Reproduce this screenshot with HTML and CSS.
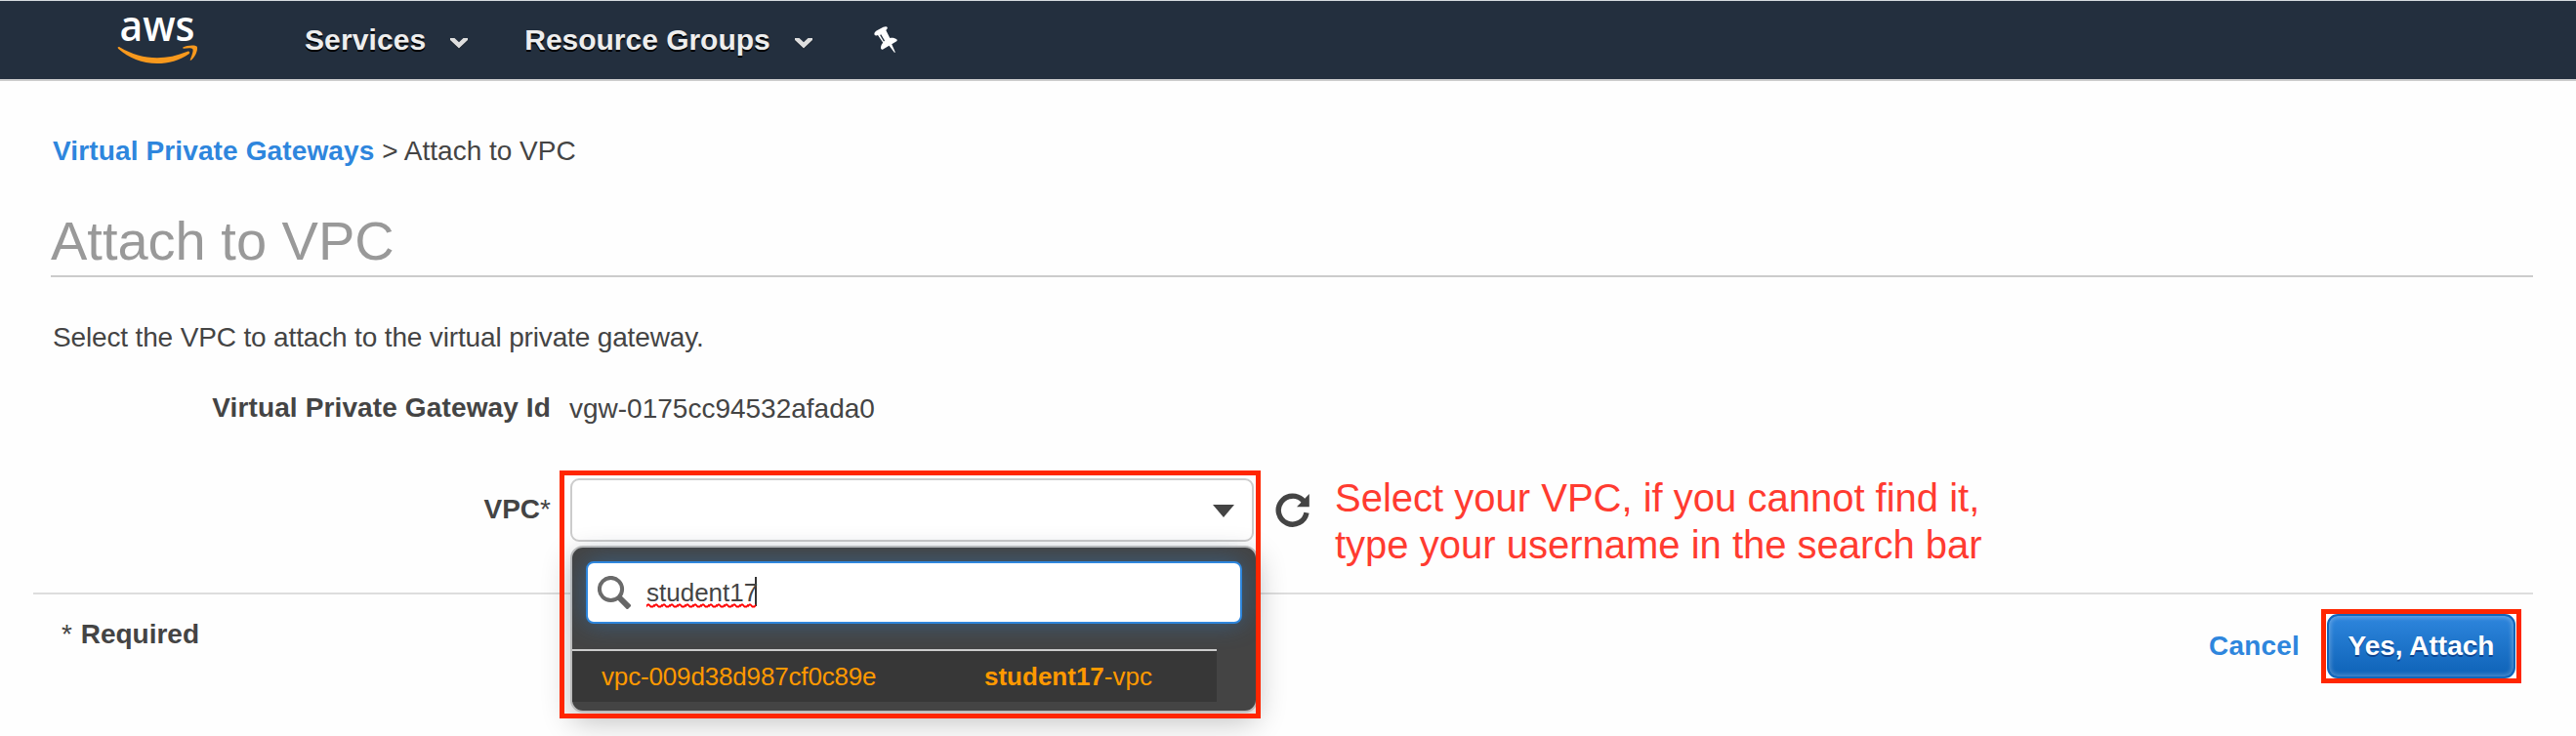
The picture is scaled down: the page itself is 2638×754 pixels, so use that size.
FILE: index.html
```html
<!DOCTYPE html>
<html lang="en">
<head>
<meta charset="utf-8">
<title>Attach to VPC</title>
<link rel="stylesheet" href="styles.css">
</head>
<body>
<header class="nav">
  <svg class="logo" width="84" height="66" viewBox="0 -12 84 66">
    <text class="logo-text" x="2.500" y="29.800" textLength="77" lengthAdjust="spacingAndGlyphs">aws</text>
    <path fill="#f8991d" d="M.6 36.600c.5-.8 1.300-.8 2.300-.2C14.500 43.200 27.500 47.200 41 47.200c10 0 20.500-2.100 31-6.500 1.800-.7 3.200 1.200 1.500 2.500C64.500 49.900 52 53 41 53 25.500 53 11.500 47.200 1.200 37.900c-.6-.5-.8-.9-.6-1.300z"/>
    <path fill="#f8991d" d="M67.400 36.600c3-2.200 12.700-3 14.200-1 1.400 2-.5 9.600-5.600 13.900-.8.700-1.600.3-1.200-.6 1.200-2.900 3.700-9.200 2.500-10.700-1.200-1.500-6.100-.8-9.100-.5-.9.100-1.400-.6-.8-1.100z"/>
  </svg>
  <div class="nav-item services">Services<svg class="chev" width="18" height="11" viewBox="0 0 18 11"><path fill="#dedede" d="M0 0h4.500L9 4.200 13.500 0H18v2L9 10.500 0 2z"/></svg></div>
  <div class="nav-item groups">Resource Groups<svg class="chev" width="18" height="11" viewBox="0 0 18 11"><path fill="#dedede" d="M0 0h4.500L9 4.200 13.500 0H18v2L9 10.500 0 2z"/></svg></div>
  <svg class="pin" width="24" height="28" viewBox="0 0 24 28"><path fill="#fff" d="M.5 8.500C0 7 1 5.500 3 4.200L9.500.8c2-1 3.800-.8 4.200.3.300 1-.3 1.900-1.400 2.800l4 8.100c2.300-.5 5.500-.1 7.200 1.600.5.800.2 1.500-.7 2l-4.600 2.600 3.600 8.300-.7.500-5.600-7.200-6.200 3.600c-1.200.7-2 .2-2.200-.8-.4-2 .7-4.300 2.200-5.900L4 9.100c-1.500.6-2.900.5-3.500-.6z"/><path fill="none" stroke="#232f3e" stroke-width="1.300" d="M6.700 8.700l3.800 6.400"/></svg>
</header>
<main class="page">
  <div class="crumbs"><a class="link">Virtual Private Gateways</a> &gt; Attach to VPC</div>
  <h1 class="title">Attach to VPC</h1>
  <p class="intro">Select the VPC to attach to the virtual private gateway.</p>
  <div class="field gateway">
    <div class="label">Virtual Private Gateway Id</div>
    <div class="value">vgw-0175cc94532afada0</div>
  </div>
  <div class="field vpc">
    <div class="label vpc-label">VPC<span class="star">*</span></div>
    <div class="picker">
      <div class="select"><svg width="22" height="13" viewBox="0 0 22 13"><path fill="#444" d="M0 0h22L11 13z"/></svg></div>
      <div class="dropdown">
        <div class="search">
          <svg width="34" height="34" viewBox="0 0 34 34"><circle cx="13.500" cy="13.500" r="11.600" fill="none" stroke="#6a6a6a" stroke-width="4"/><path stroke="#666" stroke-width="6" d="M21.500 21.500l11 11"/></svg>
          <div class="query">student17<svg class="squiggle" width="112" height="5"><defs><pattern id="wave" width="8" height="5" patternUnits="userSpaceOnUse"><path d="M-2 3.500L0 3.500 2 1.300h1L5 3.500h2L9 1.300" transform="translate(-.5 0)" fill="none" stroke="#f00" stroke-width="1.800"/></pattern></defs><rect width="112" height="5" fill="url(#wave)"/></svg></div>
        </div>
        <div class="option"><span class="vpc-id">vpc-009d38d987cf0c89e</span><span><b>student17</b>-vpc</span></div>
      </div>
      <div class="mark mark-picker"></div>
    </div>
    <svg class="refresh" width="36" height="36" viewBox="0 0 36 36"><path fill="none" stroke="#444" stroke-width="5.400" d="M32 21.300A14.500 14.500 0 1 1 28.800 9.300"/><path fill="#444" d="M34.800 2v13.200H22L28 9z"/></svg>
    <div class="note"><div class="note-a">Select your VPC, if you cannot find it,</div><div class="note-b">type your username in the search bar</div></div>
  </div>
</main>
<footer class="footer">
  <div class="required"><span class="star">*</span> Required</div>
  <div class="actions">
    <a class="link cancel">Cancel</a>
    <div class="submit"><div class="button">Yes, Attach</div><div class="mark mark-submit"></div></div>
  </div>
</footer>
</body>
</html>
```

FILE: styles.css
```css
* { box-sizing: border-box; }
body {
  margin: 0;
  height: 754px;
  overflow: hidden;
  background: #fefefe;
  color: #444;
  font: 28px/32px "Liberation Sans", Arial, sans-serif;
}
.nav {
  display: flex;
  height: 83px;
  padding-left: 120px;
  background: #232f3e;
  border-top: 1px solid #d5dbdf;
  border-bottom: 2px solid #ccc;
}
.logo { margin-top: -1px; flex: none; overflow: visible; }
.logo-text { font: 600 44px "Open Sans", "Noto Sans", sans-serif; fill: #fff; }
.nav-item {
  display: flex;
  height: 34px;
  margin-top: 23px;
  font-size: 30px;
  line-height: 34px;
  font-weight: bold;
  color: #eee;
  text-shadow: 0 2px 0 #000;
}
.services { margin-left: 108px; margin-right: 58px; letter-spacing: .1px; }
.groups { letter-spacing: -.02px; }
.chev { margin: 15px 0 0 25px; filter: drop-shadow(0 1px 0 rgba(0, 0, 0, .4)); }
.pin { margin: 26px 0 0 63px; }
.page { padding: 56px 44px 0 52px; height: 524px; }
.link { color: #2e86dd; font-weight: bold; }
.crumbs { padding-left: 2px; }
.crumbs .link { letter-spacing: .13px; }
.title {
  margin: 44px 0 0;
  height: 69px;
  border-bottom: 2px solid #ccc;
  font-size: 56px;
  line-height: 64px;
  font-weight: normal;
  color: #999;
}
.intro { margin: 46px 0 0; padding-left: 2px; letter-spacing: -.15px; }
.field { display: flex; align-items: flex-start; }
.label { width: 512px; text-align: right; font-weight: bold; flex: none; letter-spacing: .13px; }
.star { font-weight: normal; }
.gateway { margin-top: 40px; }
.value { margin: 1px 0 0 19px; }
.vpc { margin-top: 55px; }
.vpc-label { margin-top: 16px; letter-spacing: 0; }
.picker { position: relative; width: 700px; height: 65px; margin-left: 20px; flex: none; }
.select {
  display: flex;
  justify-content: flex-end;
  height: 65px;
  padding: 25px 18px 0 0;
  border: 2px solid #ccc;
  border-radius: 9px;
  background: #fff;
}
.dropdown {
  position: absolute;
  left: 0;
  top: 69px;
  width: 704px;
  height: 171px;
  padding: 14px 12px 0 14px;
  border: 2px solid #bbb;
  border-radius: 13px;
  background: #444;
  box-shadow: 0 10px 30px rgba(0, 0, 0, .24);
}
.search {
  display: flex;
  width: 672px;
  height: 64px;
  padding: 13px 0 0 10px;
  border: 2px solid #2e86dd;
  border-radius: 8px;
  background: #fff;
  box-shadow: 0 0 24px rgba(46, 134, 221, .4);
}
.query {
  position: relative;
  height: 30px;
  margin: 1px 0 0 16px;
  border-right: 2px solid #333;
  width: 113px;
  white-space: nowrap;
  font-size: 26px;
  line-height: 32px;
}
.squiggle { position: absolute; left: 0; top: 27px; }
.option {
  display: flex;
  width: 660px;
  height: 54px;
  margin: 26px 0 0 -14px;
  padding: 9px 0 0 30px;
  border-top: 2px solid #ccc;
  background: #373737;
  color: #ff9900;
  font-size: 26px;
  line-height: 34px;
}
.vpc-id { width: 392px; letter-spacing: -.16px; }
.mark { position: absolute; border: 5px solid #ff2600; }
.mark-picker { left: -11px; top: -8px; width: 718px; height: 254px; }
.refresh { margin: 14px 0 0 22px; flex: none; }
.note { margin: -4px 0 0 25px; font-size: 40px; line-height: 48px; color: #ff3b30; white-space: nowrap; }
.footer {
  display: flex;
  justify-content: space-between;
  margin: 0 44px 0 34px;
  padding: 0 18px 0 29px;
  border-top: 2px solid #ddd;
}
.required { margin-top: 25px; font-weight: bold; }
.required .star { margin-right: 1px; }
.actions { display: flex; margin-top: 20px; }
.cancel { margin: 17px 28px 0 0; letter-spacing: .2px; }
.submit { position: relative; width: 193px; height: 66px; }
.button {
  height: 66px;
  padding-top: 15px;
  border: 2px solid #1166bb;
  border-radius: 11px;
  background: linear-gradient(#2e86dd, #1166bb 90%);
  box-shadow: inset 0 0 4px 2px rgba(255, 255, 255, .25);
  color: #fff;
  font-weight: bold;
  text-align: center;
  text-shadow: 0 2px 0 rgba(0, 0, 60, .4);
}
.mark-submit { left: -6px; top: -5px; width: 205px; height: 76px; }
```
